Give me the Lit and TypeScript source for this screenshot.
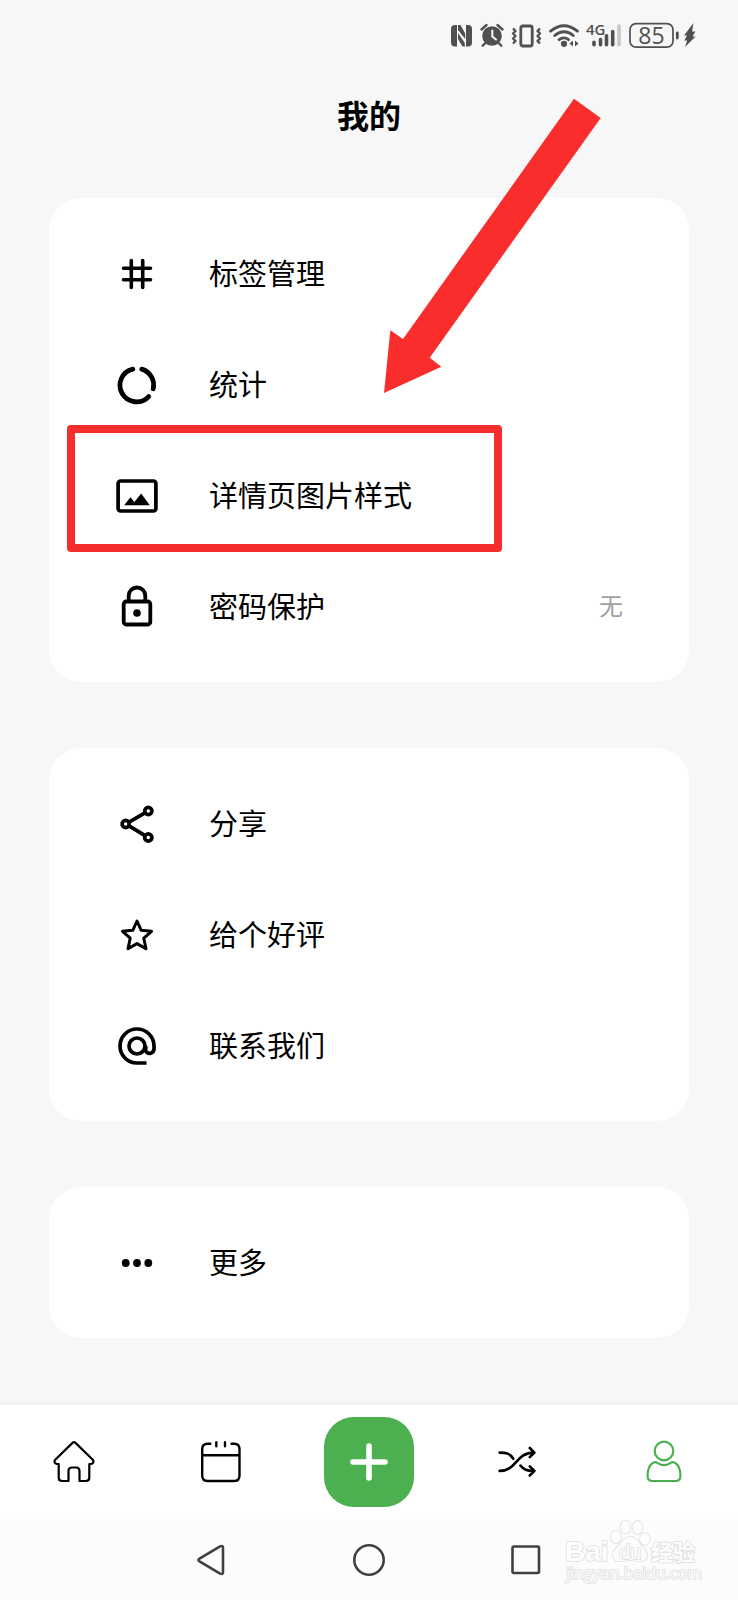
import { LitElement, html, css, svg, nothing, type TemplateResult } from "lit";
import { customElement, property } from "lit/decorators.js";

const stroke = (w: number, body: TemplateResult) => svg`
  <g fill="none" stroke="currentColor" stroke-width=${w} stroke-linecap="round" stroke-linejoin="round">${body}</g>`;

const icons: Record<string, TemplateResult> = {
  tag: stroke(3.6, svg`<path d="M17.3 9.5v27M28.7 9.5v27M9.5 17.3h27M9.5 28.7h27"/>`),
  usage: stroke(4.8, svg`<path d="M27.8 7.1a16.600 16.600 0 0 1 11.400 19.600M18.800 7.100a16.600 16.600 0 1 0 15.900 27.500"/>`),
  picture: svg`
    <rect x="4.1" y="8" width="37.8" height="30" rx="2.5" fill="none" stroke="currentColor" stroke-width="3.7"/>
    <path d="M10.2 32.2l6.2-8 4 4.8 6.8-8.4 8.6 11.6z" fill="currentColor"/>`,
  lock: svg`
    <rect x="9.7" y="17.5" width="26.6" height="23" rx="2.5" fill="none" stroke="currentColor" stroke-width="3.8"/>
    <path d="M14.7 17v-5.200a8.300 8.300 0 0 1 16.600 0V17" fill="none" stroke="currentColor" stroke-width="3.8"/>
    <circle cx="23" cy="29" r="3.8" fill="currentColor"/>`,
  share: stroke(3.7, svg`
    <circle cx="11.700" cy="23" r="3.600"/><circle cx="34.300" cy="10" r="3.600"/><circle cx="34.300" cy="36.500" r="3.600"/>
    <path d="M15 21.200l16-9.300M15 24.900l16 9.700"/>`),
  star: stroke(3, svg`<path d="M23 9l4.200 9.300 10.300 1-7.700 6.900 2.200 10.600-9-5.200-9 5.200 2.200-10.600-7.700-6.900 10.300-1z"/>`),
  at: svg`
    <g fill="none" stroke="currentColor" stroke-width="3.700">
      <path d="M32.500 40H23a17 17 0 1 1 17-17v3.200a4.400 4.400 0 0 1-8.300 1.800V23"/>
      <circle cx="23" cy="23" r="8"/>
    </g>`,
  dots: svg`<g fill="currentColor"><circle cx="11.700" cy="23" r="3.900"/><circle cx="23" cy="23" r="3.900"/><circle cx="34.300" cy="23" r="3.900"/></g>`,
  home: stroke(2.2, svg`
    <path d="M21.500 3.900q1.500-1.400 3 0L41.800 20.800c1.500 1.700.6 4-1.600 4.200h-1.900v13.500q0 3.500-3.500 3.500h-6.300V32q0-3.500-3.500-3.500h-4q-3.500 0-3.500 3.500v10h-6.300q-3.500 0-3.500-3.500V25H5.800c-2.200-.2-3.100-2.500-1.600-4.200z"/>`),
  calendar: stroke(2.4, svg`
    <path d="M12.300 4.700H9.500Q4.200 4.700 4.200 10v26.500Q4.200 42 9.500 42h26.700q5.300 0 5.300-5.500V10q0-5.300-5.300-5.300h-2.700M4.200 16.300h37.300M18.300 3.200v4M27 3.200v4"/>`),
  plus: stroke(5.6, svg`<path d="M23 7v32M7 23h32"/>`),
  shuffle: stroke(2.600, svg`
    <path d="M5.600 13.600c7 0 10.200.8 13.700 6.100M5.600 31.900c17.500 0 15.500-18.300 34.500-18.300M26.500 26.500c3 4 6 5.400 13.600 5.400M35.800 9l4.600 4.600-4.600 4.600M35.800 27.300l4.600 4.600-4.600 4.600"/>`),
  person: stroke(2.2, svg`
    <circle cx="23" cy="12" r="9.300"/>
    <path d="M12.600 23.500c-4 2-6 7.500-6 13.500 0 3.500 1.700 5 5 5h22.800c3.300 0 5-1.500 5-5 0-6-2-11.500-6-13.500-1.600-.8-3-.2-4.600.9-3.700 2.200-7.900 2.200-11.600 0-1.600-1.100-3-1.700-4.600-.9z"/>`),
  back: stroke(2.6, svg`<path d="M10.500 21.600l20.600-12.200q2.900-1.200 2.900 1.500v24.200q0 2.700-2.900 1.500L10.500 24.400q-2.200-1.400 0-2.800z"/>`),
  circle: stroke(2.6, svg`<circle cx="23" cy="23" r="14.700"/>`),
  square: stroke(2.6, svg`<rect x="9.500" y="9.500" width="26.500" height="26.500" rx="1.500"/>`),
};

@customElement("line-icon")
class LineIcon extends LitElement {
  @property() name = "";
  static styles = css`
    :host { display: block; width: 46px; height: 46px; flex: none; }
    svg { display: block; width: 100%; height: 100%; }
  `;
  render() {
    return html`<svg viewBox="0 0 46 46" aria-hidden="true">${icons[this.name]}</svg>`;
  }
}

@customElement("status-bar")
class StatusBar extends LitElement {
  static styles = css`
    :host {
      display: flex; align-items: center; justify-content: flex-end; gap: 8px;
      height: 70px; padding-right: 43px; color: #505050;
    }
    svg { display: block; height: 28px; flex: none; overflow: visible; }
    .power { display: flex; gap: 5px; }
    .num { font: 400 23px "Open Sans", sans-serif; fill: currentColor; }
    .net { font: 600 15px "Open Sans", sans-serif; fill: currentColor; }
  `;
  render() {
    return html`
      <svg width="21" viewBox="0 0 21 28" aria-label="NFC">
        <path fill="currentColor" d="M4 4h2v21.500H4q-4 0-4-4V8q0-4 4-4zM17 4h-2v21.500h2q4 0 4-4V8q0-4-4-4z"/>
        <path fill="currentColor" d="M7 4h2.500l4.700 8.500V18L7 9zM7 12l6.500 9.500.5 4h-2.500L7 18z"/>
      </svg>
      <svg width="24" viewBox="0 0 24 28" aria-label="闹钟">
        <circle cx="12" cy="15" r="9.800" fill="currentColor"/>
        <path d="M1.500 8.500l5-4.500M22.500 8.500l-5-4.500M5.500 22l-2.800 2.700M18.500 22l2.800 2.700" stroke="currentColor" stroke-width="2.400" stroke-linecap="round"/>
        <path d="M12.300 9.500v6l3.700 3" fill="none" stroke="#f7f7f7" stroke-width="2" stroke-linecap="round"/>
      </svg>
      <svg width="29" viewBox="0 0 29 28" aria-label="振动">
        <g fill="none" stroke="currentColor" stroke-width="2.800" stroke-linejoin="round">
          <rect x="8.800" y="5" width="11.400" height="20" rx="2"/>
          <path d="M1 7.500l2.500 2.500L1 12.500 3.500 15 1 17.500 3.500 20 1 22.500M28 7.500L25.500 10l2.500 2.500-2.500 2.500 2.500 2.500-2.500 2.500 2.500 2.500" stroke-width="2.400"/>
        </g>
      </svg>
      <svg width="30" viewBox="0 0 30 28" aria-label="WLAN">
        <g fill="none" stroke="currentColor" stroke-width="2.800" stroke-linecap="round">
          <path d="M1.500 10.200q13.500-11 27 0M5.700 14.500q9.300-7.600 18.600 0M10 18.700q5-3.600 9.500 0"/>
        </g>
        <circle cx="15" cy="22.800" r="3.100" fill="currentColor"/>
        <path d="M24 19.500v6l-3.500-3zM26 19.500v6l3.500-3z" fill="currentColor"/>
      </svg>
      <svg width="34" viewBox="0 0 34 28" aria-label="4G">
        <g stroke="currentColor" stroke-width="3.600" stroke-linecap="round">
          <path d="M7 21.300v2.500M13.500 18.500v5.300M19.500 14.800v9M25.700 10.500v13.300"/>
          <path d="M32 5v18.800" stroke="#c6c6c6"/>
        </g>
        <text class="net" x="-1" y="14">4G</text>
      </svg>
      <div class="power">
        <svg width="50" viewBox="0 0 50 28">
          <rect x="1" y="2.700" width="43" height="23.500" rx="6" fill="none" stroke="currentColor" stroke-width="1.700"/>
          <path d="M48.300 12v5" stroke="currentColor" stroke-width="2.800" stroke-linecap="round"/>
          <text class="num" x="22.500" y="22.500" text-anchor="middle">85</text>
        </svg>
        <svg width="11" viewBox="0 0 11 28" aria-label="充电中">
          <path fill="currentColor" d="M9.500 2L0 14.500h3L.3 19.500h2.900L1 26l10.500-10.500H8.500L11.300 10.500H8z"/>
        </svg>
      </div>
    `;
  }
}

interface Item { icon: string; label: string; value?: string; }

@customElement("menu-card")
class MenuCard extends LitElement {
  @property({ attribute: false }) items: Item[] = [];
  static styles = css`
    :host { display: block; background: #fff; border-radius: 32px; padding: 20px 0; }
    ul { list-style: none; margin: 0; padding: 0; }
    .row {
      display: flex; align-items: center; gap: 49px;
      width: 100%; height: 111px; padding: 0 66px 0 65px;
      border: 0; background: none; color: #000; text-align: left; cursor: pointer;
      font: 400 29px/40px "Noto Sans CJK SC", sans-serif;
    }
    .label, .value { padding-bottom: 4px; }
    .label { flex: 1; }
    .value { font-size: 24px; color: #a0a0a0; }
  `;
  render() {
    return html`<ul>
      ${this.items.map((i) => html`<li>
        <button class="row">
          <line-icon name=${i.icon}></line-icon>
          <span class="label">${i.label}</span>
          ${i.value ? html`<span class="value">${i.value}</span>` : nothing}
        </button>
      </li>`)}
    </ul>`;
  }
}

@customElement("app-root")
class AppRoot extends LitElement {
  static styles = css`
    :host {
      display: flex; flex-direction: column; min-height: 100vh;
      background: #f7f7f7; color: #000;
      font-family: "Noto Sans CJK SC", sans-serif;
    }
    h1 { margin: 0; padding-bottom: 4px; text-align: center; font-size: 32px; font-weight: 700; line-height: 88px; }
    main { flex: 1; display: flex; flex-direction: column; gap: 66px; padding: 36px 49px 64px; }
    .marked { position: relative; }
    .frame {
      position: absolute; left: 18px; top: 227px; width: 435px; height: 127px;
      box-sizing: border-box; border: 8px solid #f52d2d; border-radius: 4px; pointer-events: none;
    }
    .arrow { position: absolute; left: 335px; top: -100px; width: 217px; height: 295px; pointer-events: none; }
    .tabs {
      display: grid; grid-template-columns: repeat(5, 1fr); place-items: center;
      height: 114px; background: #fff; border-top: 3px solid #f0f0f0;
    }
    button { border: 0; padding: 0; background: none; color: #000; cursor: pointer; }
    .tabs .active { color: #4caf50; }
    .tabs .add {
      display: grid; place-items: center; width: 90px; height: 90px;
      border-radius: 30px; background: #4caf50; color: #fff;
    }
    .system {
      position: relative; display: flex; justify-content: center; align-items: center; gap: 111px;
      height: 81px; background: #fcfcfc;
    }
    .system button { color: #404040; }
    .mark { position: absolute; right: 36px; top: 0; width: 138px; height: 68px; overflow: visible; }
    .mark g, .mark text { fill: #fdfdfd; stroke: #dedede; stroke-width: 1.6; paint-order: stroke; }
    .latin { font: 700 28px "Liberation Sans", sans-serif; }
    .du { font: 400 20px "Liberation Sans", sans-serif; }
    .han { font: 700 22px "Noto Sans CJK SC", sans-serif; }
    .url { font: 400 16px "Open Sans", sans-serif; }
  `;

  private groups: Item[][] = [
    [
      { icon: "tag", label: "标签管理" },
      { icon: "usage", label: "统计" },
      { icon: "picture", label: "详情页图片样式" },
      { icon: "lock", label: "密码保护", value: "无" },
    ],
    [
      { icon: "share", label: "分享" },
      { icon: "star", label: "给个好评" },
      { icon: "at", label: "联系我们" },
    ],
    [{ icon: "dots", label: "更多" }],
  ];

  render() {
    return html`
      <status-bar></status-bar>
      <h1>我的</h1>
      <main>
        <div class="marked">
          <menu-card .items=${this.groups[0]}></menu-card>
          <div class="frame"></div>
          <svg class="arrow" viewBox="0 0 217 295" aria-hidden="true">
            <path fill="#fa2d2d" d="M190 .7L216.700 20 45.700 259.700l11.600 9L0 295l6.300-62.700L19 241z"/>
          </svg>
        </div>
        <menu-card .items=${this.groups[1]}></menu-card>
        <menu-card .items=${this.groups[2]}></menu-card>
      </main>
      <nav class="tabs">
        <button aria-label="首页"><line-icon name="home"></line-icon></button>
        <button aria-label="日历"><line-icon name="calendar"></line-icon></button>
        <button class="add" aria-label="新建"><line-icon name="plus"></line-icon></button>
        <button aria-label="随机"><line-icon name="shuffle"></line-icon></button>
        <button class="active" aria-label="我的"><line-icon name="person"></line-icon></button>
      </nav>
      <div class="system">
        <button aria-label="返回"><line-icon name="back"></line-icon></button>
        <button aria-label="主屏幕"><line-icon name="circle"></line-icon></button>
        <button aria-label="最近任务"><line-icon name="square"></line-icon></button>
        <svg class="mark" viewBox="0 0 138 68">
          <text class="latin" x="1" y="42">Bai</text>
          <g>
            <ellipse cx="52" cy="18" rx="5" ry="6.500"/><ellipse cx="61.500" cy="8" rx="5" ry="6.500"/>
            <ellipse cx="73.500" cy="8.500" rx="5" ry="6.500"/><ellipse cx="81" cy="20" rx="5" ry="6"/>
            <path d="M66 18c5 0 7 3 10 7s7 6 7 11c0 6-5 7-9 6-5-1-11-1-16 0s-9-1-9-6 4-7 7-11 5-7 10-7z"/>
          </g>
          <text class="du" x="55" y="40">du</text>
          <text class="han" x="87" y="41">经验</text>
          <text class="url" x="2" y="60">jingyan.baidu.com</text>
        </svg>
      </div>
    `;
  }
}
